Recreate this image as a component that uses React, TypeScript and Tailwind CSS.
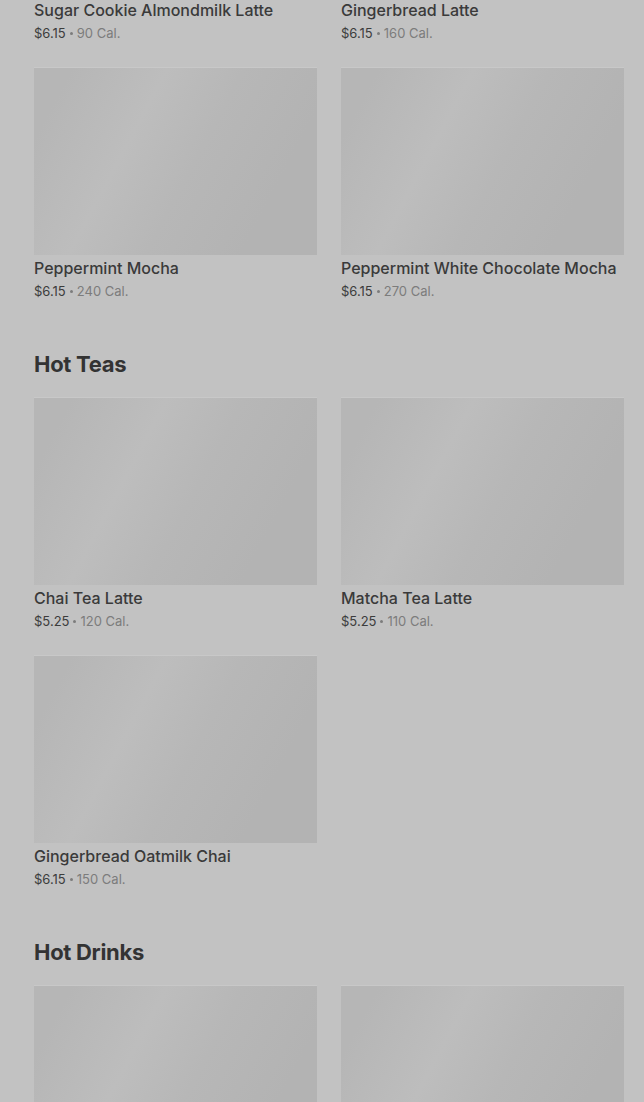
import React from "react";

type Item = { name: string; price: string; cal: string };

const sections: { title?: string; items: Item[] }[] = [
  {
    items: [
      { name: "Sugar Cookie Almondmilk Latte", price: "$6.15", cal: "90 Cal." },
      { name: "Gingerbread Latte", price: "$6.15", cal: "160 Cal." },
      { name: "Peppermint Mocha", price: "$6.15", cal: "240 Cal." },
      { name: "Peppermint White Chocolate Mocha", price: "$6.15", cal: "270 Cal." },
    ],
  },
  {
    title: "Hot Teas",
    items: [
      { name: "Chai Tea Latte", price: "$5.25", cal: "120 Cal." },
      { name: "Matcha Tea Latte", price: "$5.25", cal: "110 Cal." },
      { name: "Gingerbread Oatmilk Chai", price: "$6.15", cal: "150 Cal." },
    ],
  },
  {
    title: "Hot Drinks",
    items: [
      { name: "Hot Chocolate", price: "$4.95", cal: "370 Cal." },
      { name: "Steamed Milk", price: "$3.95", cal: "200 Cal." },
    ],
  },
];

const Card = ({ item }: { item: Item }) => (
  <div className="flex flex-col">
    <div className="h-[188px] w-full bg-[linear-gradient(118deg,#b6b6b6_10%,#bdbdbd_35%,#b7b7b7_55%,#b3b3b3_80%)] border-t border-[#c8c8c8]" />
    <div className="mt-[3px] text-[16px] leading-[20px] font-medium text-[#3a3a3a] whitespace-nowrap">{item.name}</div>
    <div className="mt-[4px] flex items-center text-[13px] leading-[18px] text-[#3c3c3c]">
      <span>{item.price}</span>
      <span className="mx-[4px] h-[3px] w-[3px] rounded-full bg-[#7c7c7c]" />
      <span className="text-[#7c7c7c]">{item.cal}</span>
    </div>
  </div>
);

export default function App() {
  return (
    <div className="h-screen bg-[#c2c2c2] overflow-hidden font-['Inter','Liberation_Sans',sans-serif]">
      <div className="pl-[34px] pr-[20px] mt-[-191px] flex flex-col">
        {sections.map((s, i) => (
          <section key={i} className={i > 0 ? "mt-[50px]" : ""}>
            {s.title && (
              <h2 className="text-[22px] leading-[28px] font-bold tracking-[-0.3px] text-[#333333] mb-[19px]">{s.title}</h2>
            )}
            <div className="grid grid-cols-2 gap-x-[24px] gap-y-[25px]">
              {s.items.map((it) => (
                <Card key={it.name} item={it} />
              ))}
            </div>
          </section>
        ))}
      </div>
    </div>
  );
}
